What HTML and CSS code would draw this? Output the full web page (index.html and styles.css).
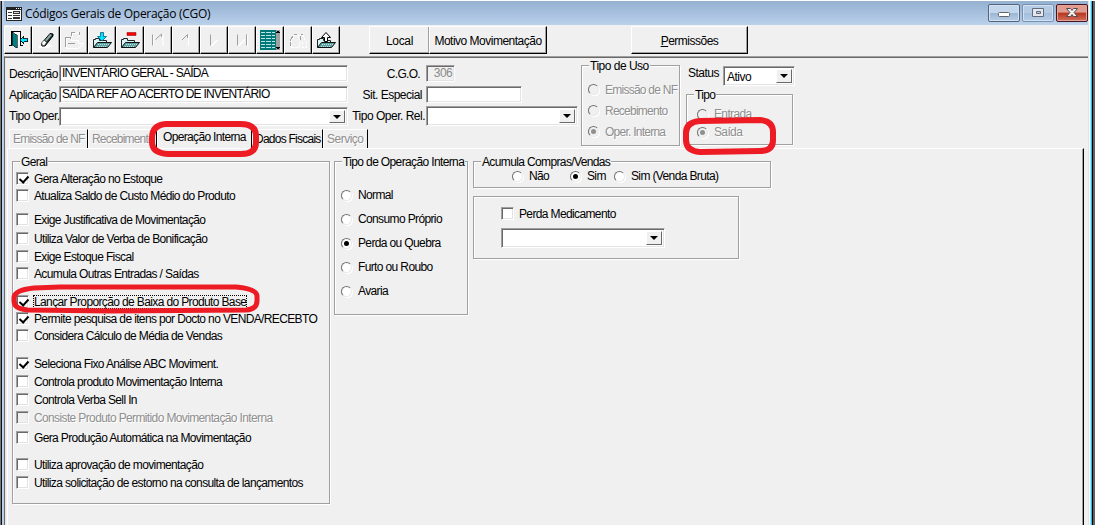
FILE: index.html
```
<!DOCTYPE html>
<html lang="pt-BR">
<head>
    <meta charset="utf-8">
    <title>Códigos Gerais de Operação (CGO)</title>
    <link rel="stylesheet" href="styles.css">
</head>
<body>

<svg class="defs" width="0" height="0">
    <symbol id="folder" viewBox="0 0 28 28">
        <path d="M5.500 21.500v-8h2v-1h4v2h7v2" fill="#d8f4f4" stroke="#222"/>
        <path d="M5.500 21.500l4-5h14l-4 5z" fill="#5fa0a0" stroke="#111"/>
        <path d="M10 18.500h11M9 20.500h10" stroke="#b8e4e4" stroke-dasharray="1 1"/>
    </symbol>
</svg>

<div class="window">
    <div class="edge-left"></div>
    <div class="main">

        <div class="titlebar">
            <svg class="app-icon" width="16" height="14" viewBox="0 0 16 14" shape-rendering="crispEdges">
                <path d="M0 0h16v14H0z" fill="#222"/>
                <path d="M1 3h14v10H1z" fill="#fff"/>
                <path d="M10 1h1v1h-1zM12 1h1v1h-1zM14 1h1v1h-1z" fill="#fff"/>
                <path d="M2 5h4v1H2zM2 8h4v1H2zM2 11h4v1H2zM7 4h7v3H7zM7 8h7v1H7zM7 10h7v2H7z" fill="#333"/>
                <path d="M8 5h5v1H8z" fill="#ddd"/>
            </svg>
            <span class="title">Códigos Gerais de Operação (CGO)</span>
            <div class="caption-buttons">
                <div class="caption"><svg width="30" height="16" viewBox="0 0 30 16"><rect x="9.500" y="7.500" width="11" height="4" rx="1" fill="#fff" stroke="#666"/></svg></div>
                <div class="caption dim"><svg width="30" height="16" viewBox="0 0 30 16"><path d="M9.500 3.500h11v8h-11zM13.500 6.500v2h4v-2z" fill="#e4e8ee" stroke="#606c7c" fill-rule="evenodd"/></svg></div>
                <div class="caption close"><svg width="30" height="16" viewBox="0 0 30 16"><path d="M9.500 3.500h4l1.500 2 1.500-2h4l-3.500 4 3.500 4h-4l-1.500-2-1.500 2h-4l3.500-4z" fill="#f4f4f4" stroke="#5a4a52"/></svg></div>
            </div>
        </div>

        <div class="toolbar">
            <div class="tool"><svg viewBox="0 0 28 28" shape-rendering="crispEdges">
                <path d="M5 19.500h3M16 19.500h3M7.500 5v15M7 5.500h10M16.500 5v15" stroke="#000"/>
                <path d="M8 6h8v13H8z" fill="#fff"/>
                <path d="M8 6l5 3v13l-5-3z" fill="#008080" stroke="#000" stroke-width=".6"/>
                <path d="M15.500 14l4-4v2.500h4v3h-4V18z" fill="#00e5ff" stroke="#000" stroke-width=".8"/>
            </svg></div>
            <div class="tool"><svg viewBox="0 0 28 28">
                <path d="M6 20h6l5-2 4 2-5 2H8z" fill="#fff"/>
                <path d="M9.500 17.500l8.500-10 3 .5v2l-8 10h-3z" fill="#1b2c2c" stroke="#000"/>
                <path d="M13 14l5-6 2 1-5.500 6.500z" fill="#8aa6a6"/>
                <path d="M9.500 17l2.500-3 2.500 2.500-2 3h-2z" fill="#fff" stroke="#444" stroke-width=".7"/>
            </svg></div>
            <div class="tool"><svg viewBox="0 0 28 28" shape-rendering="crispEdges">
                <path d="M6 22V12h5v2h7v3h6l-5 5zM12 11V7h5M17 6l3 3-3 3" stroke="#fff" fill="none"/>
                <path d="M5 21V11h5v2M11 10V6h4M8 17h7M19 6v3" stroke="#a0a0a0" fill="none"/>
            </svg></div>
            <div class="tool"><svg viewBox="0 0 28 28">
                <use href="#folder"/>
                <path d="M12.500 6.500h3v4h3l-4.500 4.500-4.500-4.500h3z" fill="#00e5ff" stroke="#006080" stroke-width=".8"/>
            </svg></div>
            <div class="tool"><svg viewBox="0 0 28 28">
                <use href="#folder"/>
                <path d="M11 6.500h9v3h-9z" fill="#f00" stroke="#800" stroke-width=".5"/>
            </svg></div>
            <div class="tool"><svg viewBox="0 0 28 28">
                <path d="M9.500 9v11M19 8.500V20" stroke="#fff" fill="none" stroke-width="1.200"/>
                <path d="M8.500 8.500v11M11.500 13.500l6-5.500v3" stroke="#a0a0a0" fill="none"/>
            </svg></div>
            <div class="tool"><svg viewBox="0 0 28 28">
                <path d="M16.500 9v11" stroke="#fff" fill="none"/>
                <path d="M15.500 12V8.500l-5.500 5.500" stroke="#a0a0a0" fill="none"/>
            </svg></div>
            <div class="tool"><svg viewBox="0 0 28 28">
                <path d="M11.500 20l6-6" stroke="#fff" fill="none" stroke-width="1.500"/>
                <path d="M10.500 19.500v-11" stroke="#a0a0a0" fill="none"/>
            </svg></div>
            <div class="tool"><svg viewBox="0 0 28 28">
                <path d="M19.500 9v11.500M10.500 20l6.500-6.500" stroke="#fff" fill="none" stroke-width="1.400"/>
                <path d="M9.500 19.500v-11M18.500 8.500v11" stroke="#a0a0a0" fill="none"/>
            </svg></div>
            <div class="tool"><svg viewBox="0 0 28 28" shape-rendering="crispEdges">
                <path d="M4 4h20v20H4z" fill="#007878"/>
                <path d="M5 6.500h14M5 9.500h14M5 12.500h14M5 15.500h14M5 18.500h14M5 21.500h14" stroke="#b8e8e8"/>
                <path d="M9.500 5v18M15.500 5v18" stroke="#007878"/>
                <path d="M20 4h4v20h-4z" fill="#a0a0a0"/>
                <path d="M20 7h4l-2-3zM20 21h4l-2 3z" fill="#000"/>
            </svg></div>
            <div class="tool"><svg viewBox="0 0 28 28" shape-rendering="crispEdges">
                <path d="M7 21v-5l4-7h3v4h2V9h3l3 7v5h-4v-5h-3v5z" fill="none" stroke="#fff" stroke-dasharray="3 1"/>
                <path d="M10 8h3M17 8h2M6 15l3-5M16 10v4M6 16v4" fill="none" stroke="#a0a0a0"/>
            </svg></div>
            <div class="tool"><svg viewBox="0 0 28 28">
                <use href="#folder"/>
                <path d="M12.500 15.500v-4h-3l4.500-5 4.500 5h-3v4z" fill="#fff" stroke="#000"/>
            </svg></div>
            <div class="button local">Local</div>
            <div class="button motivo">Motivo Movimentação</div>
            <div class="button permissoes"><span><u>P</u>ermissões</span></div>
        </div>

        <div class="content">
            <div class="form">
                <div class="form-left">
                    <div class="fields">
                        <div class="labels">
                            <label>Descrição</label>
                            <label>Aplicação</label>
                            <label>Tipo Oper.</label>
                        </div>
                        <div class="inputs inputs-wide">
                            <div class="input caps">INVENTÁRIO GERAL - SAÍDA</div>
                            <div class="input caps">SAÍDA REF AO ACERTO DE INVENTÁRIO</div>
                            <div class="input select"><i class="arrow"></i></div>
                        </div>
                        <div class="labels labels-right">
                            <label class="cgo">C.G.O.</label>
                            <label class="sit">Sit. Especial</label>
                            <label>Tipo Oper. Rel.</label>
                        </div>
                        <div class="inputs">
                            <div class="input number">306</div>
                            <div class="input especial"></div>
                            <div class="input select rel"><i class="arrow"></i></div>
                        </div>
                    </div>
                    <div class="tabs">
                        <div class="tab off">Emissão de NF</div>
                        <div class="tab off receb">Recebimento</div>
                        <div class="tab active">Operação Interna</div>
                        <div class="tab dados">Dados Fiscais</div>
                        <div class="tab off servico">Serviço</div>
                    </div>
                </div>
                <div class="group tipo-uso">
                    <span class="legend">Tipo de Uso</span>
                    <div class="radio off"><i></i>Emissão de NF</div>
                    <div class="radio off"><i></i>Recebimento</div>
                    <div class="radio off on"><i></i>Oper. Interna</div>
                </div>
                <div class="form-right">
                    <div class="status">
                        <label>Status</label>
                        <div class="input select">Ativo<i class="arrow"></i></div>
                    </div>
                    <div class="group tipo">
                        <span class="legend">Tipo</span>
                        <div class="radio off"><i></i>Entrada</div>
                        <div class="radio off on"><i></i>Saída</div>
                    </div>
                </div>
            </div>

            <div class="page">
                <div class="group geral">
                    <span class="legend">Geral</span>
                    <div class="check on"><i></i><span>Gera Alteração no Estoque</span></div>
                    <div class="check"><i></i><span>Atualiza Saldo de Custo Médio do Produto</span></div>
                    <div class="check mt-7"><i></i><span>Exige Justificativa de Movimentação</span></div>
                    <div class="check mt-2"><i></i><span>Utiliza Valor de Verba de Bonificação</span></div>
                    <div class="check mt-1"><i></i><span>Exige Estoque Fiscal</span></div>
                    <div class="check"><i></i><span>Acumula Outras Entradas / Saídas</span></div>
                    <div class="check on focus mt-11"><i></i><span>Lançar Proporção de Baixa do Produto Base</span></div>
                    <div class="check on"><i></i><span>Permite pesquisa de itens por Docto no VENDA/RECEBTO</span></div>
                    <div class="check"><i></i><span>Considera Cálculo de Média de Vendas</span></div>
                    <div class="check on mt-11"><i></i><span>Seleciona Fixo Análise ABC Moviment.</span></div>
                    <div class="check mt-1"><i></i><span>Controla produto Movimentação Interna</span></div>
                    <div class="check mt-1"><i></i><span>Controla Verba Sell In</span></div>
                    <div class="check off mt-1"><i></i><span>Consiste Produto Permitido Movimentação Interna</span></div>
                    <div class="check mt-3"><i></i><span>Gera Produção Automática na Movimentação</span></div>
                    <div class="check mt-10"><i></i><span>Utiliza aprovação de movimentação</span></div>
                    <div class="check mt-1"><i></i><span>Utiliza solicitação de estorno na consulta de lançamentos</span></div>
                </div>

                <div class="group tipo-interna">
                    <span class="legend">Tipo de Operação Interna</span>
                    <div class="radio"><i></i>Normal</div>
                    <div class="radio"><i></i>Consumo Próprio</div>
                    <div class="radio on"><i></i>Perda ou Quebra</div>
                    <div class="radio"><i></i>Furto ou Roubo</div>
                    <div class="radio"><i></i>Avaria</div>
                </div>

                <div class="side">
                    <div class="group acumula">
                        <span class="legend">Acumula Compras/Vendas</span>
                        <div class="radio nao"><i></i>Não</div>
                        <div class="radio sim on"><i></i>Sim</div>
                        <div class="radio"><i></i>Sim (Venda Bruta)</div>
                    </div>
                    <div class="group perda">
                        <div class="check"><i></i><span>Perda Medicamento</span></div>
                        <div class="input select"><i class="arrow"></i></div>
                    </div>
                </div>
            </div>
        </div>
    </div>
    <div class="edge-right"></div>
</div>

<svg class="marks" width="1095" height="525" viewBox="0 0 1095 525">
    <path d="M166 124H240Q256 124 256 136V142Q256 154 241 154H168Q152 153 152 142V138Q152 125 166 124Z"/>
    <path d="M700 121L760 120Q773 121 773 132V140Q773 151 760 151L700 152Q686 151 686 140V133Q686 122 700 121Z"/>
    <path class="thin" d="M34 288L60 287H236Q257 289 257 296V301Q257 309 246 310L110 311 28 310Q14 309 14 301V298Q14 290 34 288Z"/>
</svg>

</body>
</html>
```
FILE: styles.css
```
* {
    box-sizing: border-box;
}

body {
    margin: 0;
    font-family: "Liberation Sans", Arial, sans-serif;
    font-size: 12px;
    letter-spacing: -0.63px;
    color: #000;
    background-color: #f0f0f0;
    overflow: hidden;
}

.defs {
    display: block;
}

/* window frame */
.window {
    display: flex;
    height: 525px;
    border-top: 1px solid #fff;
}

.edge-left {
    width: 4px;
    background: linear-gradient(to right, #777 1px, #111 1px, #111 2px, #b9cfea 2px);
}

.edge-right {
    width: 7px;
    background: linear-gradient(to right, #e3e3e3 1px, #fff 1px, #fff 2px, #b4dcf2 2px, #b4dcf2 3px, #20c4f4 3px, #20c4f4 4px, #000 4px, #000 5px, #5c6468 5px);
}

.main {
    display: flex;
    flex-direction: column;
    flex: 1;
}

.titlebar {
    display: flex;
    flex-shrink: 0;
    height: 24px;
    padding: 3px 0 0 2px;
    background: linear-gradient(#94b1cf, #a6c0de 50%, #bbd1ec);
}

.app-icon {
    margin-top: 3px;
}

.title {
    margin-left: 3px;
    font-family: "Open Sans", sans-serif;
    font-size: 12px;
    line-height: 19px;
    letter-spacing: -0.28px;
}

.caption-buttons {
    display: flex;
    gap: 2px;
    margin-left: auto;
}

.caption {
    width: 32px;
    height: 18px;
    border: 1px solid #52657c;
    border-radius: 2px;
    box-shadow: inset 0 0 0 1px #d3e2f2;
    background: linear-gradient(#c3d6eb 48%, #9ab6d4 50%, #b6cde8);
}

.caption svg {
    display: block;
}

.caption.dim {
    border-color: #7890b0;
    background: linear-gradient(#b5cbe4 48%, #a3bddb 50%, #b6cde8);
}

.caption.close {
    border-color: #431422;
    box-shadow: inset 0 0 0 1px #e3a399;
    background: linear-gradient(#e09c8e 45%, #b8341c 50%, #d0705c);
}

/* toolbar */
.toolbar {
    display: flex;
    flex-shrink: 0;
    height: 31px;
    padding-top: 1px;
}

.tool,
.button {
    height: 28px;
    border: 1px solid #fff;
    border-right-color: #000;
    border-bottom-color: #000;
    box-shadow: inset -1px -1px 0 #a0a0a0;
}

.tool {
    width: 28px;
}

.tool svg {
    display: block;
    width: 28px;
    height: 28px;
    margin: -1px;
}

.button {
    display: flex;
    align-items: center;
    justify-content: center;
    padding-top: 2px;
    letter-spacing: -0.5px;
}

.local {
    width: 60px;
    margin-left: 29px;
    border-right: none;
    letter-spacing: -0.3px;
}

.motivo {
    width: 118px;
}

.permissoes {
    width: 117px;
    margin-left: 84px;
}

/* form */
.content {
    flex: 1;
    min-height: 0;
    overflow: hidden;
    border-top: 1px solid #a0a0a0;
    border-left: 1px solid #696969;
    box-shadow: inset 0 1px 0 #696969, inset 1px 0 0 #e8e8e8;
}

.form {
    display: flex;
    height: 91px;
    padding: 8px 0 0 4px;
}

.form-left {
    width: 572px;
}

.fields {
    display: flex;
    height: 61px;
}

.labels {
    width: 50px;
    letter-spacing: -0.5px;
}

.labels label {
    display: block;
    height: 21px;
    line-height: 19px;
    white-space: nowrap;
}

.labels-right {
    width: 73px;
    margin: 0 0 0 4px;
    text-align: right;
}

.labels-right .cgo {
    padding-right: 5px;
    letter-spacing: -0.7px;
}

.labels-right .sit {
    padding-right: 3px;
}

.inputs {
    display: flex;
    flex-direction: column;
    gap: 4px;
    width: 152px;
}

.inputs-wide {
    width: 289px;
}

.labels-right + .inputs {
    margin-left: 1px;
}

.input {
    height: 17px;
    padding-left: 1px;
    line-height: 15px;
    border: 1px solid #a0a0a0;
    border-right-color: #fff;
    border-bottom-color: #fff;
    box-shadow: inset 1px 1px 0 #696969, inset -1px -1px 0 #e3e3e3;
    background-color: #fff;
    white-space: nowrap;
}

.caps {
    padding-left: 2px;
    letter-spacing: -0.73px;
}

.number {
    width: 29px;
    padding-right: 2px;
    text-align: right;
    color: #8a8a8a;
    background-color: #f0f0f0;
}

.especial {
    width: 96px;
}

.select {
    display: flex;
    justify-content: flex-end;
    height: 19px;
    padding: 2px;
    line-height: 16px;
}

.rel {
    height: 20px;
    margin-top: -1px;
}

.arrow {
    display: flex;
    align-items: center;
    justify-content: center;
    width: 16px;
    margin-left: auto;
    border: 1px solid #fff;
    border-right-color: #696969;
    border-bottom-color: #696969;
    background-color: #f0f0f0;
}

.arrow::before {
    content: "";
    border: 4px solid transparent;
    border-top-color: #000;
    border-bottom: none;
}

.off {
    color: #8f8f8f;
    text-shadow: 1px 1px 0 #fff;
}

/* tabs */
.tabs {
    display: flex;
    align-items: flex-end;
    height: 22px;
}

.tab {
    height: 19px;
    width: 79px;
    padding-left: 3px;
    line-height: 19px;
    letter-spacing: -0.8px;
    white-space: nowrap;
    border-top: 1px solid #fff;
    border-left: 1px solid #fff;
    border-right: 1px solid #000;
}

.tab.receb {
    width: 69px;
}

.tab.active {
    height: 22px;
    width: 95px;
    padding-left: 5px;
    line-height: 20px;
    letter-spacing: -0.66px;
}

.tab.dados {
    width: 71px;
    padding-left: 2px;
    letter-spacing: -0.75px;
}

.tab.servico {
    width: 45px;
    letter-spacing: -0.5px;
}

/* group boxes */
.group {
    position: relative;
    border: 1px solid #a0a0a0;
    box-shadow: 1px 1px 0 #fff, inset 1px 1px 0 #fff;
}

.legend {
    position: absolute;
    top: -7px;
    left: 7px;
    padding: 0 1px;
    line-height: 14px;
    background-color: #f0f0f0;
    white-space: nowrap;
}

.tipo-uso {
    width: 99px;
    height: 81px;
    padding: 13px 0 0 6px;
}

.tipo-uso .legend {
    letter-spacing: -0.5px;
}

.tipo-uso .radio {
    height: 21px;
    letter-spacing: -0.75px;
}

.form-right {
    width: 115px;
    padding-left: 6px;
}

.status {
    display: flex;
    height: 29px;
    padding-left: 2px;
    line-height: 17px;
    letter-spacing: -0.5px;
}

.status .select {
    width: 72px;
    height: 20px;
    margin: 1px 0 0 auto;
    padding-left: 3px;
    line-height: 17px;
}

.tipo {
    width: 107px;
    height: 51px;
    padding: 10px 0 0 10px;
}

/* radios and checks */
.radio {
    display: flex;
    align-items: center;
    height: 18px;
    white-space: nowrap;
}

.radio i {
    display: flex;
    flex-shrink: 0;
    align-items: center;
    justify-content: center;
    width: 11px;
    height: 11px;
    margin-right: 6px;
    border: 1px solid #707070;
    border-right-color: #e8e8e8;
    border-bottom-color: #e8e8e8;
    border-radius: 50%;
    box-shadow: 1px 1px 0 #fff;
    background-color: #fff;
}

.radio.off i {
    background-color: #f0f0f0;
}

.radio.on i::before {
    content: "";
    width: 5px;
    height: 5px;
    border-radius: 50%;
    background-color: #000;
}

.radio.off.on i::before {
    background-color: #909090;
}

.check {
    display: flex;
    align-items: center;
    height: 17px;
    white-space: nowrap;
}

.check i {
    width: 13px;
    height: 13px;
    margin-right: 4px;
    border: 1px solid #a0a0a0;
    border-right-color: #fff;
    border-bottom-color: #fff;
    box-shadow: inset 1px 1px 0 #696969, inset -1px -1px 0 #e3e3e3;
    background-color: #fff;
}

.check span {
    padding: 0 1px;
    line-height: 14px;
}

.check.off i {
    background-color: #f0f0f0;
}

.check.on i::before {
    content: "";
    display: block;
    width: 4px;
    height: 7px;
    margin: 1px 0 0 4px;
    border: solid #000;
    border-width: 0 2px 2px 0;
    transform: rotate(42deg);
}

.check.focus span {
    outline: 1px dotted #000;
    outline-offset: -1px;
}

.mt-1 { margin-top: 1px; }
.mt-2 { margin-top: 2px; }
.mt-3 { margin-top: 3px; }
.mt-7 { margin-top: 7px; }
.mt-10 { margin-top: 10px; }
.mt-11 { margin-top: 11px; }

/* tab page */
.page {
    display: flex;
    align-items: flex-start;
    width: 1077px;
    height: 380px;
    margin-left: 2px;
    padding: 12px 0 0 4px;
    border: 1px solid #fff;
    border-right-color: #000;
    box-shadow: inset -1px 0 0 #a0a0a0;
}

.geral {
    width: 318px;
    height: 343px;
    padding: 8px 0 0 3px;
}

.tipo-interna {
    width: 134px;
    height: 154px;
    margin-left: 4px;
    padding: 21px 0 0 6px;
}

.tipo-interna .radio {
    height: 24px;
}

.side {
    margin-left: 5px;
}

.acumula {
    display: flex;
    width: 298px;
    height: 27px;
    padding: 5px 0 0 38px;
}

.nao {
    width: 58px;
}

.sim {
    width: 44px;
}

.perda {
    width: 266px;
    height: 63px;
    margin-top: 8px;
    padding: 8px 0 0 27px;
}

.perda .select {
    width: 164px;
    height: 20px;
    margin-top: 6px;
}

/* red highlights */
.marks {
    position: absolute;
    top: 0;
    left: 0;
}

.marks path {
    fill: none;
    stroke: #ed1c24;
    stroke-width: 6;
}

.marks .thin {
    stroke-width: 5;
}
```
